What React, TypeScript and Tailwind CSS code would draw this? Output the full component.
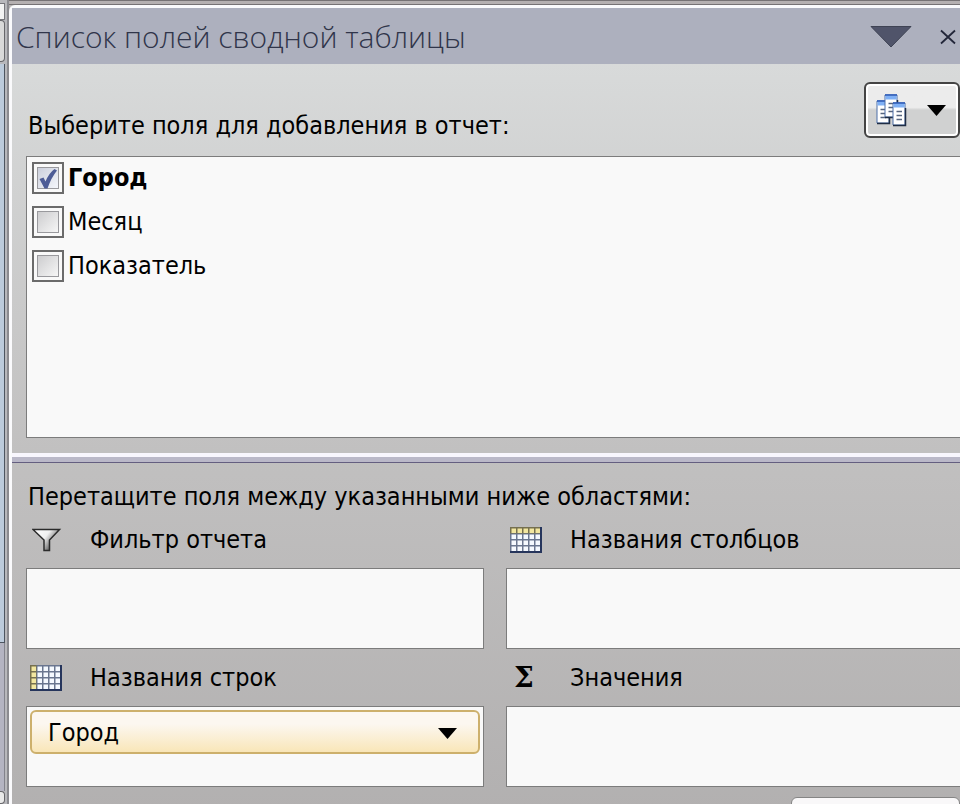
import * as React from 'react'

interface Field {
  id: string
  label: string
}

const FIELDS: Field[] = [
  { id: 'city', label: 'Город' },
  { id: 'month', label: 'Месяц' },
  { id: 'value', label: 'Показатель' },
]

export default function App(): React.ReactElement {
  const [selected, setSelected] = React.useState<string[]>(['city'])

  const toggle = (id: string) =>
    setSelected((prev) => (prev.includes(id) ? prev.filter((v) => v !== id) : [...prev, id]))

  const rows = FIELDS.filter((f) => selected.includes(f.id))

  return (
    <div className="flex h-screen flex-col overflow-hidden bg-[#b3b1b1] font-['DejaVu_Sans_Condensed','DejaVu_Sans',sans-serif] text-[25px] leading-8 text-black">
      <div className="flex min-h-0 flex-1">
        <SheetEdge />
        <div className="flex min-w-0 flex-1 flex-col">
          <div className="h-[5px] shrink-0 border-y border-[#767274] bg-[#b5b0b1]" />
          <section className="flex min-h-0 flex-1 flex-col rounded-tl-md border-t-[3px] border-l-[3px] border-[#fafafc]">
            <TitleBar />
            <div className="flex flex-1 flex-col bg-linear-to-b from-[#d8dada] via-[#c1c0c0] to-[#b1afaf]">
              <div className="flex h-[92px] items-end justify-between pl-4">
                <h2 className="pb-[14px]">Выберите поля для добавления в отчет:</h2>
                <LayoutButton />
              </div>
              <ul className="ml-[14px] flex h-[282px] shrink-0 flex-col gap-3 border border-r-0 border-[#7c7c7c] bg-[#f9f9f9] p-[5px]">
                {FIELDS.map((field) => (
                  <FieldItem
                    key={field.id}
                    field={field}
                    checked={selected.includes(field.id)}
                    onToggle={() => toggle(field.id)}
                  />
                ))}
              </ul>
              <div className="mt-[15px] h-[10px] shrink-0 border-t-4 border-b border-t-[#f8f6fd] border-b-[#645e80] bg-[#bab8c8]" />
              <h2 className="mt-5 pl-4 leading-7">Перетащите поля между указанными ниже областями:</h2>
              <div className="-mr-1 ml-[14px] grid grid-cols-2 gap-x-[22px]">
                <Area title="Фильтр отчета" icon={<FunnelIcon />} />
                <Area title="Названия столбцов" icon={<GridIcon header="top" />} />
                <Area title="Названия строк" icon={<GridIcon header="left" />}>
                  {rows.map((f) => (
                    <FieldChip key={f.id} label={f.label} />
                  ))}
                </Area>
                <Area
                  title="Значения"
                  icon={<span className="pl-1 font-['DejaVu_Serif',serif] text-[28px] font-bold">Σ</span>}
                />
              </div>
              <div className="mt-[10px] flex justify-end">
                <button type="button" aria-label="Обновить" className="h-10 w-[169px] rounded-md border border-[#858585] bg-[#f9f8f9]" />
              </div>
            </div>
          </section>
        </div>
      </div>
    </div>
  )
}

// Sliver of the worksheet scroll bar left of the pane
function SheetEdge(): React.ReactElement {
  return (
    <div className="flex w-[9px] shrink-0 flex-col border-r-2 border-[#8b8b90] bg-[#b8b8bc] pr-0.5 pt-[3px]">
      <div className="h-[17px] border border-l-0 border-[#77777c] bg-[#f3f3f3]" />
      <div className="h-[42px] rounded-r-sm border border-l-0 border-[#66666a] bg-[#d9d9d9]" />
      <div className="mt-[2px] h-[579px] border-r border-b border-[#4d5560] bg-[#bccbdc]" />
      <div className="flex-1 border-r border-[#82828b] bg-[#b4b4c2]" />
      <div className="h-[13px] rounded-r-sm border border-l-0 border-[#66666a] bg-[#e9e9e9]" />
    </div>
  )
}

function TitleBar(): React.ReactElement {
  return (
    <header className="flex h-14 shrink-0 items-center bg-[#adb0be] pt-0.5 pl-1 text-[#30354a]">
      <h1 className="flex-1 font-['Open_Sans',sans-serif] text-3xl leading-10 font-light">
        Список полей сводной таблицы
      </h1>
      <button type="button" aria-label="Параметры области" className="mr-7">
        <svg width="42" height="22" viewBox="0 0 42 22" className="block">
          <path d="M1 .5h40L21 21z" fill="#50546a" stroke="#3f4354" />
        </svg>
      </button>
      <button type="button" aria-label="Закрыть" className="mr-1">
        <svg width="16" height="16" viewBox="0 0 16 16" className="block">
          <path d="M1 1.5l14 13M15 1.5l-14 13" stroke="#23273a" strokeWidth="1.8" />
        </svg>
      </button>
    </header>
  )
}

function LayoutButton(): React.ReactElement {
  return (
    <button
      type="button"
      aria-label="Макет полей"
      className="mb-[18px] flex h-14 w-24 items-center justify-between rounded-md border-2 border-[#444] bg-linear-to-b from-[#ececec] from-45% to-[#d0d1d1] to-50% pr-3 pl-[10px] inset-ring-2 inset-ring-white"
    >
      <svg width="31" height="33" viewBox="0 0 31 33">
        <PageShape x={1} y={7} />
        <PageShape x={9} y={1} />
        <PageShape x={17} y={9} />
      </svg>
      <Caret />
    </button>
  )
}

function PageShape({ x, y }: { x: number; y: number }): React.ReactElement {
  return (
    <g transform={`translate(${x} ${y})`}>
      <path d="M0 0h12v22H0z" fill="#fff" stroke="#4c6ea8" />
      <path d="M.5 .5h11v4H.5z" fill="#7fb0f5" />
      <path d="M0 0h12" stroke="#2859b8" strokeWidth="1.5" />
      <path d="M3.5 8.5h5.5M3.5 12.5h5.5M3.5 16.5h5.5" stroke="#56657f" strokeWidth="1.5" />
      <path d="M0 22.5h12.5V5" fill="none" stroke="#1f2d45" strokeWidth="1.5" />
    </g>
  )
}

function Caret(): React.ReactElement {
  return (
    <svg width="19" height="11" viewBox="0 0 19 11" className="block">
      <path d="M0 0h19l-9.5 11z" fill="#000" />
    </svg>
  )
}

interface FieldItemProps {
  field: Field
  checked: boolean
  onToggle: () => void
}

function FieldItem({ field, checked, onToggle }: FieldItemProps): React.ReactElement {
  return (
    <li>
      <label className={checked ? 'flex items-center gap-1 font-bold' : 'flex items-center gap-1'}>
        <span className="relative size-8 border-2 border-[#6b6b6b] bg-[#f9f9f9] p-[3px]">
          <input
            type="checkbox"
            checked={checked}
            onChange={onToggle}
            className="block size-[22px] appearance-none border border-[#99999d] bg-linear-to-br from-[#cdcdcf] to-[#f6f6f6] checked:from-[#ccd0dc] checked:to-[#f4f6fb]"
          />
          {checked && (
            <svg viewBox="0 0 20 22" className="pointer-events-none absolute top-1 left-1 h-[22px] w-5">
              <path d="M1.5 11l4-1.5 2 4Q11 5 16.5 1L19 2.5Q13 10 9.5 20.5H6.5z" fill="#4d5c96" />
            </svg>
          )}
        </span>
        <span className="-mt-px">{field.label}</span>
      </label>
    </li>
  )
}

interface AreaProps {
  title: string
  icon: React.ReactNode
  children?: React.ReactNode
}

function Area({ title, icon, children }: AreaProps): React.ReactElement {
  return (
    <div>
      <div className="flex h-[57px] items-center pl-1">
        <span className="flex w-[60px] items-center">{icon}</span>
        <h3>{title}</h3>
      </div>
      <div className="h-[81px] border border-[#7c7c7c] bg-[#f9f9f9] p-[3px]">{children}</div>
    </div>
  )
}

function FieldChip({ label }: { label: string }): React.ReactElement {
  return (
    <button
      type="button"
      className="flex h-11 w-full items-center justify-between rounded-md border-2 border-[#cdb06c] bg-linear-to-b from-[#fcf7f0] from-30% to-[#f9e6b8] pt-0.5 pr-[21px] pl-4"
    >
      {label}
      <Caret />
    </button>
  )
}

function FunnelIcon(): React.ReactElement {
  return (
    <svg width="30" height="24" viewBox="0 0 30 24" className="ml-0.5">
      <defs>
        <linearGradient id="funnel" x1="0" x2="1" y1="0" y2="0.6">
          <stop offset="0" stopColor="#fff" />
          <stop offset="0.5" stopColor="#f0f0f0" />
          <stop offset="1" stopColor="#3c3c3c" />
        </linearGradient>
      </defs>
      <path d="M1 1.5h26.5L17.5 12v10.5h-5.5V12z" fill="url(#funnel)" stroke="#2b2b2b" strokeWidth="1.5" />
    </svg>
  )
}

function GridIcon({ header }: { header: 'top' | 'left' }): React.ReactElement {
  const cells = [0, 1, 2, 3].flatMap((r) => [0, 1, 2, 3, 4].map((c) => ({ r, c })))
  return (
    <svg width="32" height="26" viewBox="0 0 32 26">
      <path d="M0 0h32v26H0z" fill="#6a7690" />
      <path d={header === 'top' ? 'M0 0h32v6.5H0z' : 'M0 0h6.5v26H0z'} fill="#76704f" />
      {cells.map(({ r, c }) => (
        <rect
          key={`${r}-${c}`}
          x={1.5 + c * 6}
          y={1.5 + r * 6}
          width="4.5"
          height="4.5"
          fill={(header === 'top' ? r : c) === 0 ? '#f3e7a0' : '#f5f9ff'}
        />
      ))}
      <path d="M0 25h31V0" fill="none" stroke="#26355c" strokeWidth="2" />
    </svg>
  )
}
